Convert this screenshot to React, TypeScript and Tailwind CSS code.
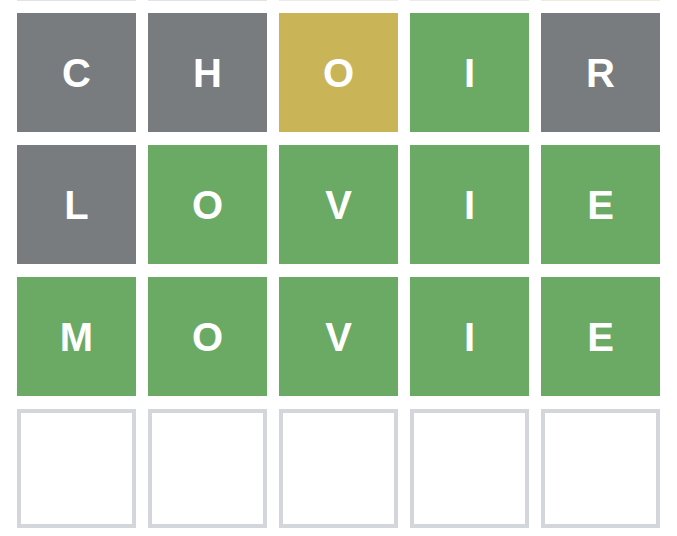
type State = 'absent' | 'present' | 'correct' | 'empty';

interface Cell {
  letter: string;
  state: State;
}

const rows: Cell[][] = [
  [
    { letter: 'C', state: 'absent' },
    { letter: 'H', state: 'absent' },
    { letter: 'O', state: 'present' },
    { letter: 'I', state: 'correct' },
    { letter: 'R', state: 'absent' },
  ],
  [
    { letter: 'L', state: 'absent' },
    { letter: 'O', state: 'correct' },
    { letter: 'V', state: 'correct' },
    { letter: 'I', state: 'correct' },
    { letter: 'E', state: 'correct' },
  ],
  [
    { letter: 'M', state: 'correct' },
    { letter: 'O', state: 'correct' },
    { letter: 'V', state: 'correct' },
    { letter: 'I', state: 'correct' },
    { letter: 'E', state: 'correct' },
  ],
  [
    { letter: '', state: 'empty' },
    { letter: '', state: 'empty' },
    { letter: '', state: 'empty' },
    { letter: '', state: 'empty' },
    { letter: '', state: 'empty' },
  ],
];

const stateClass: Record<State, string> = {
  absent: 'bg-[#787c7e] text-white',
  present: 'bg-[#c9b458] text-white',
  correct: 'bg-[#6aaa64] text-white',
  empty: 'bg-white border-[4px] border-[#d3d6da]',
};

// faint edge of the row scrolled off the top
const topEdge = ['bg-[#e2e3e4]', 'bg-[#e2e3e4]', 'bg-[#ecebe6]', 'bg-[#e8ebe6]', 'bg-[#efecd9]'];

function Tile({ letter, state }: Cell) {
  return (
    <div
      className={`w-[119px] h-[119px] flex items-center justify-center text-[40px] font-bold uppercase leading-none ${stateClass[state]}`}
    >
      {letter}
    </div>
  );
}

export default function App() {
  return (
    <div
      className="w-[677px] h-[536px] bg-white overflow-hidden pl-[17px]"
      style={{ fontFamily: '"Liberation Sans", Arial, sans-serif' }}
    >
      {/* Previous row, only its bottom edge shows */}
      <div className="flex gap-[12px] h-[1px]">
        {topEdge.map((c, i) => (
          <div key={i} className={`w-[119px] h-[1px] ${c}`} />
        ))}
      </div>

      <div className="flex flex-col gap-[13px] mt-[12px]">
        {rows.map((row, r) => (
          <div key={r} className="flex gap-[12px]">
            {row.map((cell, c) => (
              <Tile key={c} {...cell} />
            ))}
          </div>
        ))}
      </div>
    </div>
  );
}
